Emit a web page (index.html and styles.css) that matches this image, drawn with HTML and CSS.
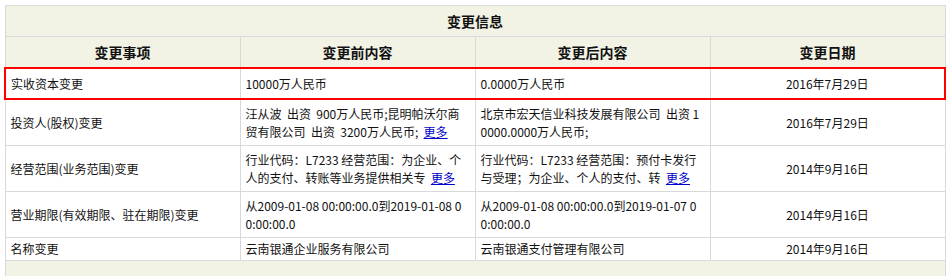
FILE: index.html
```html
<!DOCTYPE html>
<html lang="zh-CN">
<head>
<meta charset="utf-8">
<title>变更信息</title>
<link rel="stylesheet" href="styles.css">
</head>
<body>
<div class="wrap">
<table class="info">
  <colgroup>
    <col class="c1"><col class="c2"><col class="c3"><col class="c4">
  </colgroup>
  <thead>
    <tr class="title"><th colspan="4">变更信息</th></tr>
    <tr class="heads"><th>变更事项</th><th>变更前内容</th><th>变更后内容</th><th>变更日期</th></tr>
  </thead>
  <tbody>
    <tr class="hl r1">
      <td>实收资本变更</td>
      <td>10000万人民币</td>
      <td>0.0000万人民币</td>
      <td class="date">2016年7月29日</td>
    </tr>
    <tr class="r2">
      <td>投资人(股权)变更</td>
      <td>汪从波&nbsp; 出资&nbsp; 900万人民币;昆明帕沃尔商<br>贸有限公司&nbsp; 出资&nbsp; 3200万人民币;&nbsp; <a href="#">更多</a></td>
      <td>北京市宏天信业科技发展有限公司&nbsp; 出资 1<br>0000.0000万人民币;</td>
      <td class="date">2016年7月29日</td>
    </tr>
    <tr class="r2">
      <td>经营范围(业务范围)变更</td>
      <td>行业代码：L7233 经营范围：为企业、个<br>人的支付、转账等业务提供相关专&nbsp; <a href="#">更多</a></td>
      <td>行业代码：L7233 经营范围：预付卡发行<br>与受理；为企业、个人的支付、转&nbsp; <a href="#">更多</a></td>
      <td class="date">2014年9月16日</td>
    </tr>
    <tr class="r2">
      <td>营业期限(有效期限、驻在期限)变更</td>
      <td>从2009-01-08 00:00:00.0到2019-01-08 0<br>0:00:00.0</td>
      <td>从2009-01-08 00:00:00.0到2019-01-07 0<br>0:00:00.0</td>
      <td class="date">2014年9月16日</td>
    </tr>
    <tr class="r5">
      <td>名称变更</td>
      <td>云南银通企业服务有限公司</td>
      <td>云南银通支付管理有限公司</td>
      <td class="date">2014年9月16日</td>
    </tr>
    <tr class="foot"><td colspan="4"></td></tr>
  </tbody>
</table>
</div>
</body>
</html>
```
FILE: styles.css
```css
html, body {
  margin: 0;
  padding: 0;
  background: #fff;
}
.wrap {
  padding: 5px 0 0 4px;
  height: 271px;
  overflow: hidden;
}
.info {
  border-collapse: collapse;
  width: 940px;
  table-layout: fixed;
  font-family: "Noto Sans CJK SC", "Liberation Sans", sans-serif;
  font-size: 12px;
  color: #111;
}
.info .c1, .info .c2, .info .c3, .info .c4 { width: 235px; }
.info th, .info td {
  border: 1px solid #d9d9d9;
  padding: 0 5px;
  white-space: nowrap;
  overflow: hidden;
  text-align: left;
  vertical-align: middle;
  line-height: 18px;
}
.info th {
  background: #f2f2e5;
  font-size: 14px;
  font-weight: bold;
  text-align: center;
  color: #111;
}
.title th { height: 30px; }
.heads th { height: 30px; }
.r1 td { height: 29px; }
.r2 td { height: 45px; }
.r5 td { height: 22px; }
.info td.date { text-align: center; }
.hl td {
  border-top: 2px solid #ff0000;
  border-bottom: 2px solid #ff0000;
}
.hl td:first-child { border-left: 2px solid #ff0000; }
.hl td:last-child { border-right: 2px solid #ff0000; }
.foot td {
  background: #f2f2e5;
  height: 30px;
}
.info a {
  color: #0000cc;
  text-decoration: underline;
}
```
